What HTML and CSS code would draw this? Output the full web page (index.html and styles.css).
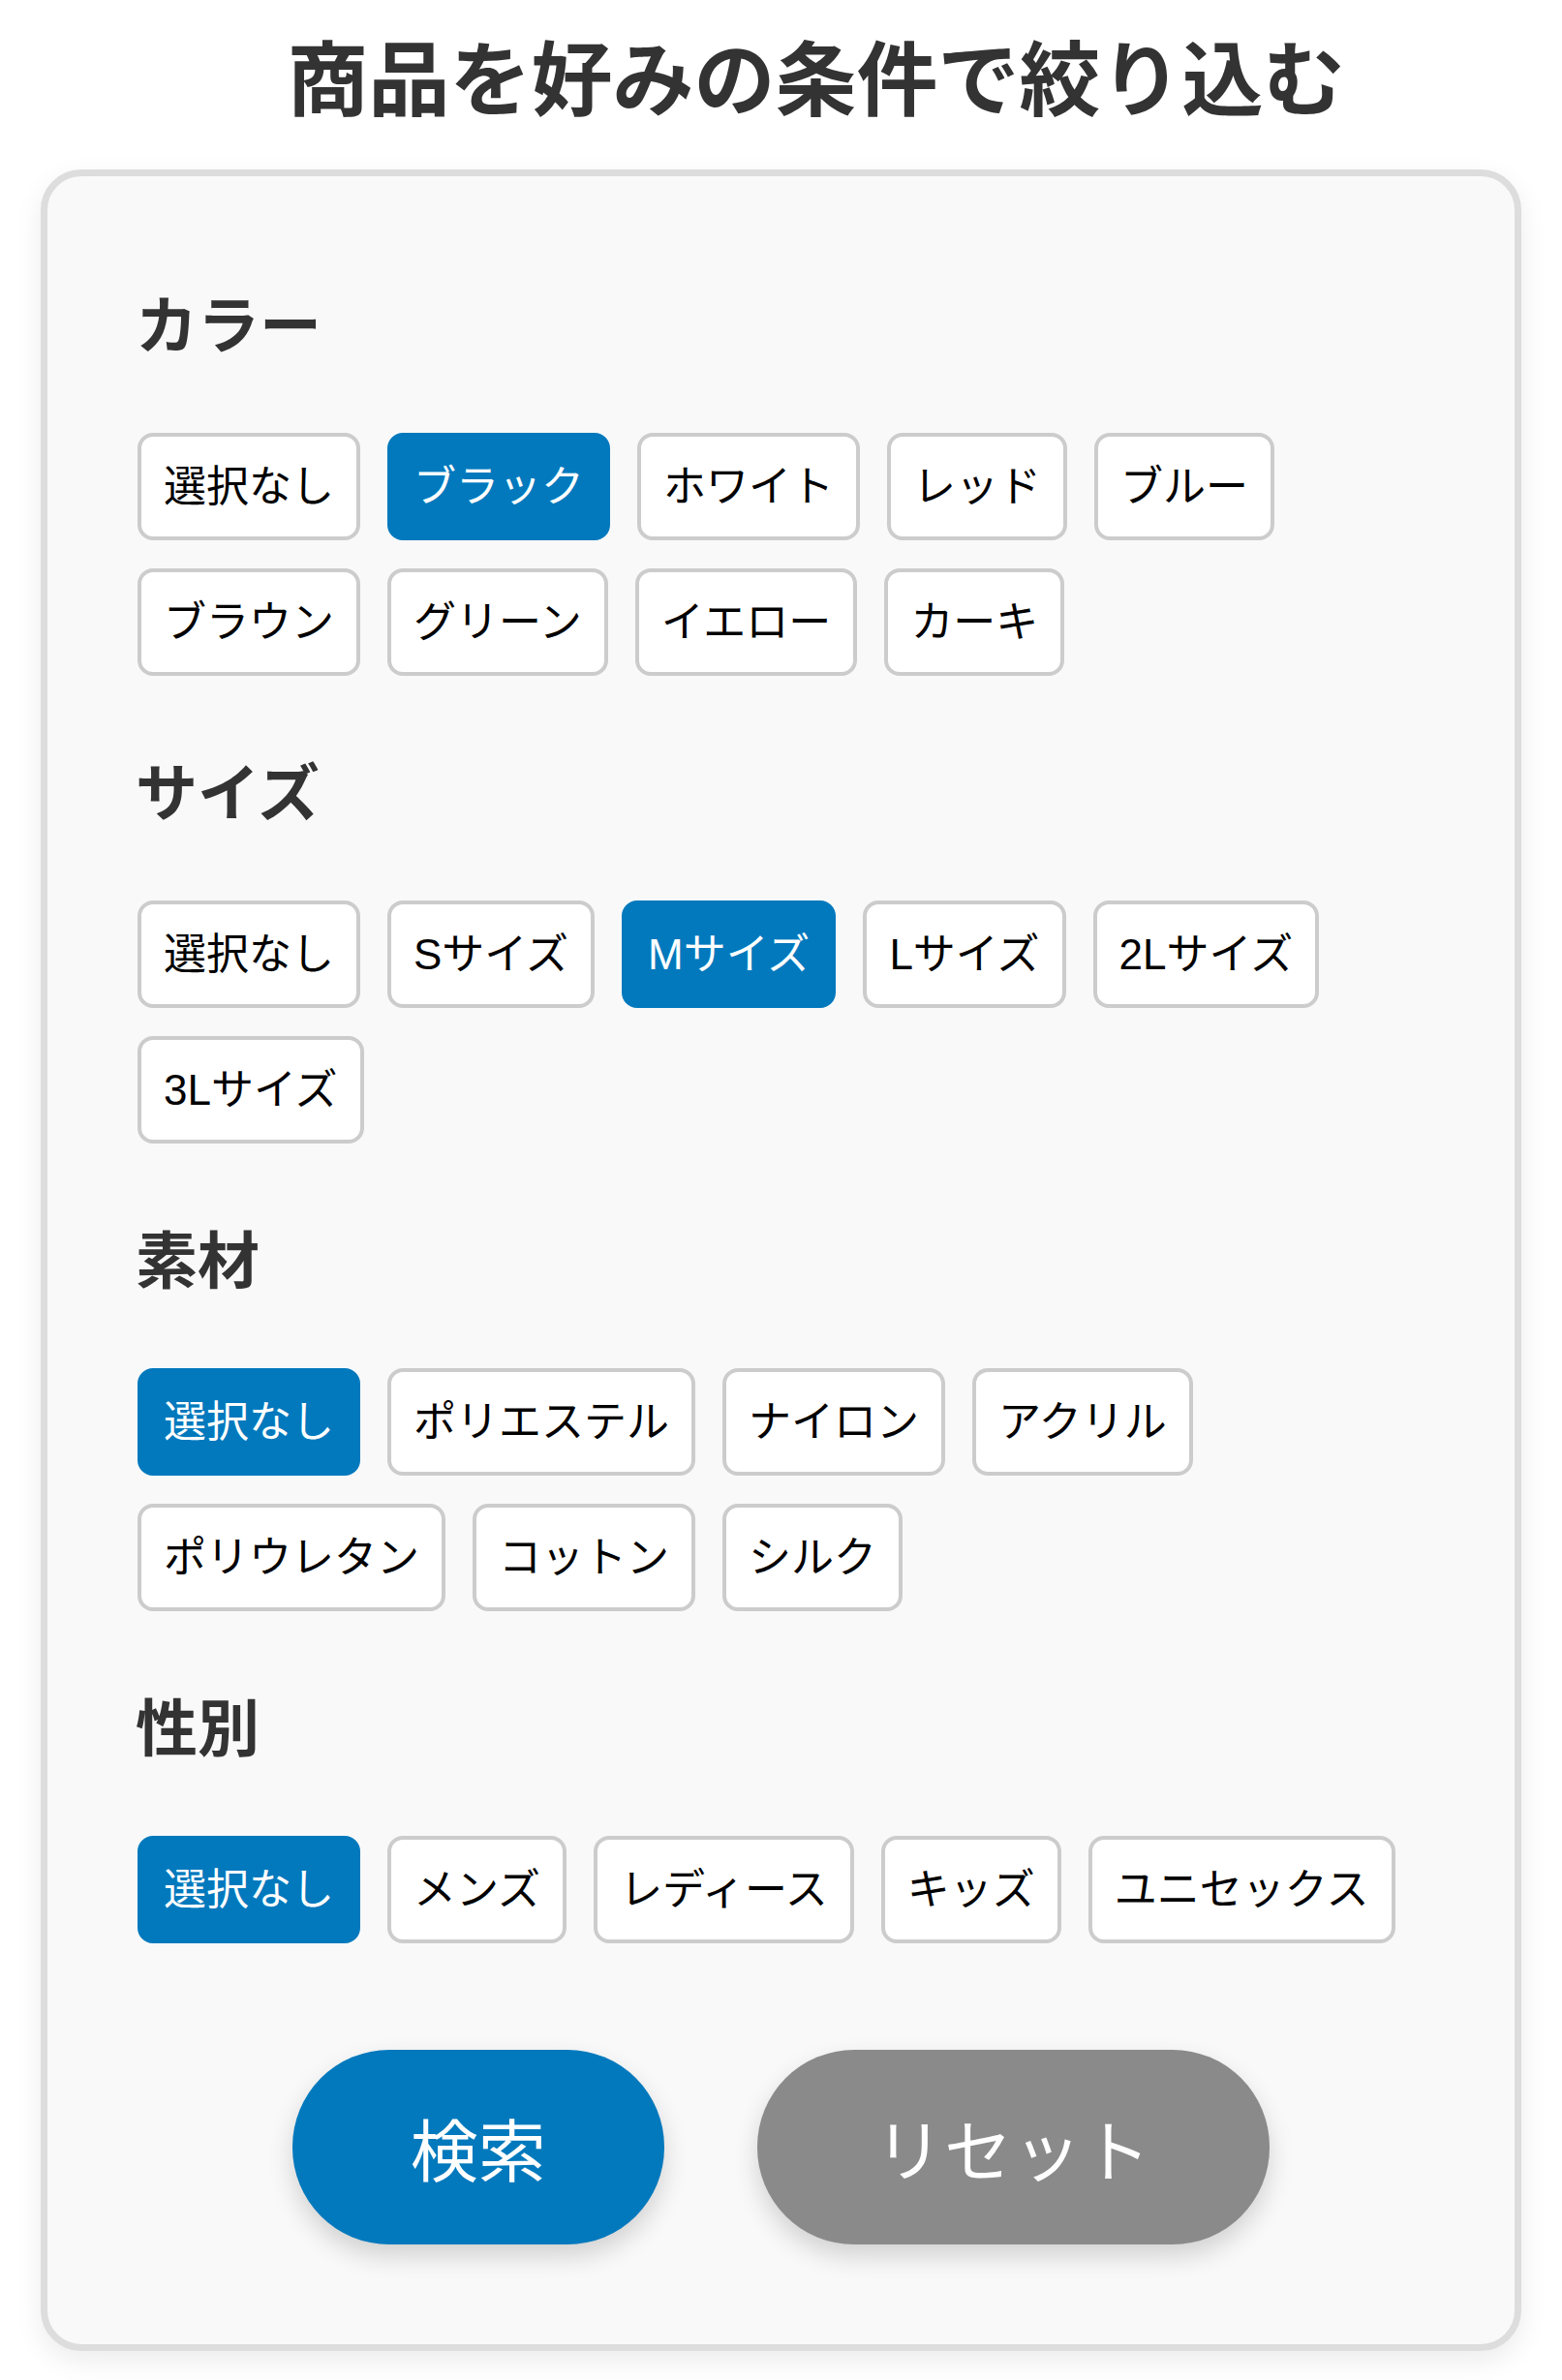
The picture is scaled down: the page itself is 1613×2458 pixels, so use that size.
FILE: index.html
```html
<!DOCTYPE html>
<html lang="ja">
<head>
<meta charset="utf-8">
<title>商品を好みの条件で絞り込む</title>
<link rel="stylesheet" href="styles.css">
</head>
<body>
<h1 class="title">商品を好みの条件で絞り込む</h1>
<div class="card">
  <section class="group">
    <h2 class="group-title">カラー</h2>
    <div class="chips">
      <span class="chip">選択なし</span>
      <span class="chip is-active">ブラック</span>
      <span class="chip">ホワイト</span>
      <span class="chip">レッド</span>
      <span class="chip">ブルー</span>
      <span class="chip">ブラウン</span>
      <span class="chip">グリーン</span>
      <span class="chip">イエロー</span>
      <span class="chip">カーキ</span>
    </div>
  </section>
  <section class="group">
    <h2 class="group-title">サイズ</h2>
    <div class="chips">
      <span class="chip">選択なし</span>
      <span class="chip">Sサイズ</span>
      <span class="chip is-active">Mサイズ</span>
      <span class="chip">Lサイズ</span>
      <span class="chip">2Lサイズ</span>
      <span class="chip">3Lサイズ</span>
    </div>
  </section>
  <section class="group">
    <h2 class="group-title">素材</h2>
    <div class="chips">
      <span class="chip is-active">選択なし</span>
      <span class="chip">ポリエステル</span>
      <span class="chip">ナイロン</span>
      <span class="chip">アクリル</span>
      <span class="chip">ポリウレタン</span>
      <span class="chip">コットン</span>
      <span class="chip">シルク</span>
    </div>
  </section>
  <section class="group">
    <h2 class="group-title">性別</h2>
    <div class="chips">
      <span class="chip is-active">選択なし</span>
      <span class="chip">メンズ</span>
      <span class="chip">レディース</span>
      <span class="chip">キッズ</span>
      <span class="chip">ユニセックス</span>
    </div>
  </section>
  <div class="actions">
    <button class="btn btn-search" type="button">検索</button>
    <button class="btn btn-reset" type="button">リセット</button>
  </div>
</div>
</body>
</html>
```

FILE: styles.css
```css
* { box-sizing: border-box; }

body {
  margin: 0;
  background: #ffffff;
  font-family: "Noto Sans CJK JP", "Noto Sans", sans-serif;
  color: #333333;
}

.title {
  margin: 27px 0 48px;
  padding-left: 72px;
  text-align: center;
  font-size: 84px;
  line-height: 100px;
  font-weight: 700;
  color: #333333;
}

.card {
  margin: 0 42px 30px;
  padding: 113px 93px 103px;
  background: #f9f9f9;
  border: 7px solid #dddddd;
  border-radius: 42px;
  box-shadow: 0 10px 28px rgba(0, 0, 0, 0.08);
}

.group {
  margin-bottom: 80px;
}

.group-title {
  margin: 0 0 80px -2px;
  font-size: 64px;
  line-height: 72px;
  font-weight: 700;
  color: #333333;
}

.chips {
  display: flex;
  flex-wrap: wrap;
  gap: 29px 28px;
}

.chip {
  display: inline-block;
  padding: 19px 23px;
  font-family: "Liberation Sans", "Noto Sans CJK JP", sans-serif;
  font-size: 44px;
  line-height: 65px;
  color: #000000;
  background: #ffffff;
  border: 4px solid #cccccc;
  border-radius: 16px;
  white-space: nowrap;
}

.chip.is-active {
  background: #0279bd;
  border-color: #0279bd;
  color: #ffffff;
}

.actions {
  display: flex;
  justify-content: center;
  gap: 96px;
  margin-top: 110px;
}

.btn {
  height: 201px;
  padding: 0 122px;
  border: none;
  border-radius: 100px;
  font-family: "Noto Sans CJK JP", sans-serif;
  font-size: 70px;
  font-weight: 400;
  color: #ffffff;
  box-shadow: 0 12px 26px rgba(0, 0, 0, 0.16);
}

.btn-search { background: #0279bd; }
.btn-reset { background: #8a8a8a; letter-spacing: 0.02em; }
```
